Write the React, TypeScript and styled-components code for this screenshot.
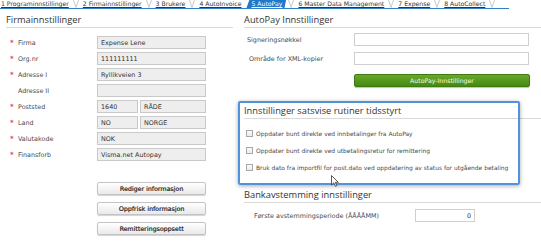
import React from 'react';
import styled, { createGlobalStyle } from 'styled-components';

const Global = createGlobalStyle`
  html, body { margin: 0; padding: 0; background: #ffffff; }
  body { font-family: "DejaVu Sans", Verdana, sans-serif; color: #444; }
  * { box-sizing: border-box; }
`;

const Page = styled.div`
  position: relative;
  width: 541px;
  height: 252px;
  overflow: hidden;
`;

const TabStrip = styled.div`
  display: flex;
  align-items: flex-end;
  height: 9px;
  width: 509px;
  overflow: hidden;
  border-bottom: 1px solid #2f7fc6;
`;

const Tab = styled.span<{ $active?: boolean }>`
  display: flex;
  align-items: flex-end;
  height: 14px;
  padding: ${p => (p.$active ? '0 5px 0 5px' : '0 1px')};
  margin-left: ${p => (p.$active ? '-2px' : '0')};
  margin-right: ${p => (p.$active ? '-2px' : '0')};
  font-size: 6.15px;
  line-height: 9px;
  white-space: nowrap;
  color: ${p => (p.$active ? '#ffffff' : '#333')};
  background: ${p => (p.$active ? '#1f78c9' : 'transparent')};
  clip-path: ${p => (p.$active ? 'polygon(5px 0, 100% 0, calc(100% - 3px) 100%, 0 100%)' : 'none')};
  text-decoration: underline;
  text-underline-offset: 1px;
`;

const Sep = styled.svg`
  flex: none;
  margin: 0 3px;
  align-self: flex-end;
`;

const Columns = styled.div`
  display: flex;
`;

const LeftCol = styled.div`
  width: 233px;
  padding-left: 6px;
  flex: none;
`;

const RightCol = styled.div`
  flex: 1;
  margin-left: 11px;
`;

const Heading = styled.div<{ $mt: number }>`
  margin-top: ${p => p.$mt}px;
  height: 15px;
  font-family: "Open Sans", "Noto Sans", sans-serif;
  font-size: 9.3px;
  line-height: 14px;
  color: #333;
  border-bottom: 1px solid #d9d9d9;
  white-space: nowrap;
`;

const FormRows = styled.div<{ $mt: number; $gap: number }>`
  display: flex;
  flex-direction: column;
  gap: ${p => p.$gap}px;
  margin-top: ${p => p.$mt}px;
`;

const Row = styled.div`
  display: flex;
  align-items: center;
  height: 13px;
`;

const LabelCell = styled.div<{ $w: number; $pl: number }>`
  display: flex;
  align-items: center;
  width: ${p => p.$w}px;
  padding-left: ${p => p.$pl}px;
  flex: none;
  font-size: 6.4px;
  color: #4a4a4a;
  white-space: nowrap;
`;

const Star = styled.span`
  width: 8px;
  color: #e0444a;
  font-size: 7px;
  font-weight: bold;
`;

const Field = styled.input<{ $w: number; $readonly?: boolean; $right?: boolean }>`
  width: ${p => p.$w}px;
  height: 13px;
  padding: 0 3px;
  margin: 0;
  border: 1px solid ${p => (p.$readonly ? '#c9c9c9' : '#cfcfcf')};
  background: ${p => (p.$readonly ? '#eeeeee' : '#ffffff')};
  font-family: "DejaVu Sans", Verdana, sans-serif;
  font-size: 6.4px;
  color: #333;
  text-align: ${p => (p.$right ? 'right' : 'left')};
  outline: none;
  flex: none;
`;

const FieldPair = styled.div`
  display: flex;
  gap: 2px;
`;

const ButtonStack = styled.div`
  display: flex;
  flex-direction: column;
  gap: 7px;
  margin-top: 21px;
  margin-left: 91px;
`;

const GreyButton = styled.div`
  width: 109px;
  height: 13px;
  display: flex;
  align-items: center;
  justify-content: center;
  border: 1px solid #c4c4c4;
  border-radius: 2px;
  background: linear-gradient(#ffffff, #e9e9e9);
  box-shadow: 0 1px 1px rgba(0, 0, 0, 0.18);
  font-size: 6.3px;
  color: #3a3a3a;
  text-shadow: 0.25px 0 0 #3a3a3a;
  white-space: nowrap;
`;

const GreenButton = styled.div`
  width: 176px;
  height: 13px;
  margin-top: 9px;
  margin-left: 110px;
  display: flex;
  align-items: center;
  justify-content: center;
  border: 1px solid #3d7a10;
  border-radius: 2px;
  background: linear-gradient(#6aa82a, #458a12);
  box-shadow: 0 1px 1px rgba(0, 0, 0, 0.25);
  font-size: 6.2px;
  color: #f3ffe8;
  white-space: nowrap;
`;

const CheckList = styled.div`
  display: flex;
  flex-direction: column;
  gap: 6px;
  margin-top: 9px;
`;

const CheckRow = styled.div`
  display: flex;
  align-items: center;
  height: 11px;
  padding-left: 2px;
  font-size: 5.95px;
  color: #4a4a4a;
  white-space: nowrap;
`;

const Box = styled.span`
  width: 7px;
  height: 7px;
  margin-right: 3px;
  border: 1px solid #a8a8a8;
  background: linear-gradient(#fafafa, #ececec);
  flex: none;
`;

const Highlight = styled.div`
  position: absolute;
  left: 238px;
  top: 101px;
  width: 282px;
  height: 84px;
  border: 2px solid #4f93dd;
  border-radius: 2px;
  box-shadow: 0 1px 4px rgba(0, 0, 0, 0.35);
  pointer-events: none;
`;

const Cursor = styled.svg`
  position: absolute;
  left: 331px;
  top: 175px;
`;

const tabs = [
  '1 Programinnstillinger',
  '2 Firmainnstillinger',
  '3 Brukere',
  '4 AutoInvoice',
  '5 AutoPay',
  '6 Master Data Management',
  '7 Expense',
  '8 AutoCollect',
];

const SepIcon = () => (
  <Sep width="6" height="8" viewBox="0 0 6 8">
    <path d="M0.5 0 L3 7.5 L5.5 0" fill="none" stroke="#c3c3c3" strokeWidth="0.9" />
  </Sep>
);

const companyRows: { label: string; req: boolean; values: string[] }[] = [
  { label: 'Firma', req: true, values: ['Expense Lene'] },
  { label: 'Org.nr', req: true, values: ['111111111'] },
  { label: 'Adresse I', req: true, values: ['Ryllikveien 3'] },
  { label: 'Adresse II', req: false, values: [''] },
  { label: 'Poststed', req: true, values: ['1640', 'RÅDE'] },
  { label: 'Land', req: true, values: ['NO', 'NORGE'] },
  { label: 'Valutakode', req: true, values: ['NOK'] },
  { label: 'Finansforb', req: true, values: ['Visma.net Autopay'] },
];

const checks = [
  'Oppdater bunt direkte ved innbetalinger fra AutoPay',
  'Oppdater bunt direkte ved utbetalingsretur for remittering',
  'Bruk dato fra importfil for post.dato ved oppdatering av status for utgående betaling',
];

export default function App() {
  return (
    <Page>
      <Global />
      <TabStrip>
        {tabs.map((t, i) => (
          <React.Fragment key={t}>
            <Tab $active={i === 4}>{t}</Tab>
            {i !== 3 && i !== 4 && <SepIcon />}
            {i === 3 && <span style={{ width: 6 }} />}
            {i === 4 && <SepIcon />}
          </React.Fragment>
        ))}
      </TabStrip>
      <Columns>
        <LeftCol>
          <Heading $mt={4}>Firmainnstillinger</Heading>
          <FormRows $mt={8} $gap={3}>
            {companyRows.map(r => (
              <Row key={r.label}>
                <LabelCell $w={91} $pl={4}>
                  <Star>{r.req ? '*' : ''}</Star>
                  {r.label}
                </LabelCell>
                {r.values.length === 1 ? (
                  <Field $w={109} $readonly readOnly value={r.values[0]} />
                ) : (
                  <FieldPair>
                    <Field $w={41} $readonly readOnly value={r.values[0]} />
                    <Field $w={66} $readonly readOnly value={r.values[1]} />
                  </FieldPair>
                )}
              </Row>
            ))}
          </FormRows>
          <ButtonStack>
            <GreyButton>Rediger informasjon</GreyButton>
            <GreyButton>Oppfrisk informasjon</GreyButton>
            <GreyButton>Remitteringsoppsett</GreyButton>
          </ButtonStack>
        </LeftCol>
        <RightCol>
          <Heading $mt={4}>AutoPay Innstillinger</Heading>
          <FormRows $mt={5} $gap={6}>
            <Row>
              <LabelCell $w={110} $pl={3}>Signeringsnøkkel</LabelCell>
              <Field $w={175} readOnly value="" />
            </Row>
            <Row>
              <LabelCell $w={110} $pl={5}>Område for XML-kopier</LabelCell>
              <Field $w={175} readOnly value="" />
            </Row>
          </FormRows>
          <GreenButton>AutoPay-Innstillinger</GreenButton>
          <Heading $mt={17}>Innstillinger satsvise rutiner tidsstyrt</Heading>
          <CheckList>
            {checks.map(c => (
              <CheckRow key={c}>
                <Box />
                {c}
              </CheckRow>
            ))}
          </CheckList>
          <Heading $mt={15}>Bankavstemming innstillinger</Heading>
          <FormRows $mt={6} $gap={0}>
            <Row>
              <LabelCell $w={171} $pl={10}>Første avstemmingsperiode (ÅÅÅÅMM)</LabelCell>
              <Field $w={60} $right readOnly value="0" />
            </Row>
          </FormRows>
        </RightCol>
      </Columns>
      <Highlight />
      <Cursor width="8" height="12" viewBox="0 0 8 12">
        <path d="M0.5 0.5 L0.5 10 L2.8 7.8 L4.4 11.3 L5.8 10.7 L4.3 7.3 L7.3 7.3 Z" fill="#ffffff" stroke="#333" strokeWidth="0.8" strokeLinejoin="round" />
      </Cursor>
    </Page>
  );
}
